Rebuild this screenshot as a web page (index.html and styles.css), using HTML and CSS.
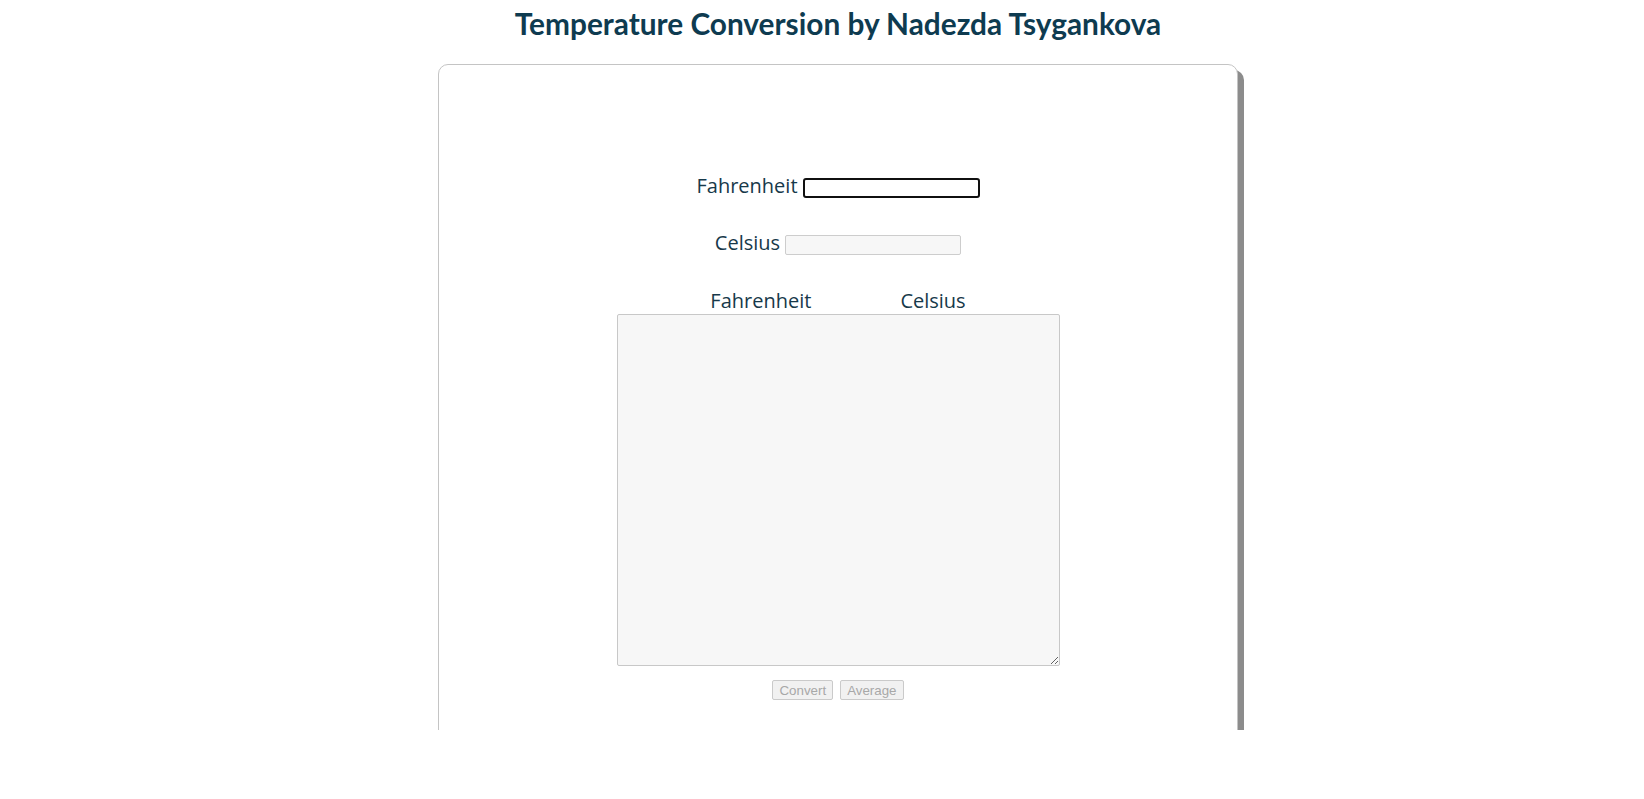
FILE: index.html
```html
<!DOCTYPE html>
<html lang="en">
<head>
<meta charset="utf-8">
<title>Temperature Conversion</title>
<link rel="stylesheet" href="styles.css">
</head>
<body>
<div class="page">
  <h1 class="title">Temperature Conversion by Nadezda Tsygankova</h1>
  <div class="stage">
    <main class="card">
      <form class="converter">
        <div class="field-row">
          <label class="field-label" for="fahrenheit">Fahrenheit</label>
          <input class="field-input field-input--active" id="fahrenheit" type="text">
        </div>
        <div class="field-row field-row--second">
          <label class="field-label" for="celsius">Celsius</label>
          <input class="field-input field-input--disabled" id="celsius" type="text" disabled>
        </div>
        <div class="history-head">
          <span class="history-col">Fahrenheit</span>
          <span class="history-col">Celsius</span>
        </div>
        <textarea class="history" readonly></textarea>
        <div class="actions">
          <button class="btn" type="button" disabled>Convert</button>
          <button class="btn" type="button" disabled>Average</button>
        </div>
      </form>
    </main>
  </div>
</div>
</body>
</html>
```

FILE: styles.css
```css
html, body {
  margin: 0;
  padding: 0;
  background: #ffffff;
}

.page {
  padding-left: 32px;
  font-family: "Open Sans", "Lato", "Liberation Sans", sans-serif;
  color: #17394a;
}

.title {
  margin: 0;
  padding-top: 5px;
  height: 64px;
  box-sizing: border-box;
  text-align: center;
  font-family: "Lato", "Open Sans", sans-serif;
  font-size: 29.8px;
  line-height: 38px;
  font-weight: 700;
  color: #0e3b50;
}

.stage {
  height: 666px;
  overflow: hidden;
}

.card {
  width: 800px;
  height: 800px;
  box-sizing: border-box;
  margin: 0 auto;
  border: 1px solid #c4c4c4;
  border-radius: 10px;
  box-shadow: 6px 6px 0 #8c8c8c;
  background: #ffffff;
  padding-top: 113px;
}

.converter {
  display: flex;
  flex-direction: column;
  align-items: center;
}

.field-row {
  display: flex;
  align-items: center;
  gap: 5px;
  height: 20px;
}

.field-row--second {
  margin-top: 37px;
}

.field-label {
  font-size: 20px;
  line-height: 24px;
  position: relative;
  top: -2px;
}

.field-input {
  box-sizing: border-box;
  height: 20px;
  margin: 0;
  padding: 1px 3px;
  font-size: 13px;
  font-family: "Liberation Sans", sans-serif;
}

.field-input--active {
  width: 177px;
  border: 2px solid #101010;
  border-radius: 3px;
  background: #ffffff;
}

.field-input--disabled {
  width: 176px;
  border: 1px solid #cdcdcd;
  border-radius: 2px;
  background: #f7f7f7;
}

.history-head {
  display: flex;
  gap: 89px;
  margin-top: 37px;
  font-size: 20px;
  line-height: 18px;
  height: 22px;
}

.history {
  box-sizing: border-box;
  width: 443px;
  height: 352px;
  margin: 0;
  border: 1px solid #c8c8c8;
  border-radius: 2px;
  background: #f7f7f7;
  resize: both;
  outline: none;
}

.actions {
  display: flex;
  gap: 7px;
  margin-top: 14px;
}

.btn {
  box-sizing: border-box;
  height: 20px;
  padding: 0 6px;
  margin: 0;
  font-family: "Liberation Sans", Arial, sans-serif;
  font-size: 13.333px;
  color: #a8a8a8;
  background: #f1f1f1;
  border: 1px solid #cacaca;
  border-radius: 2px;
}
```
